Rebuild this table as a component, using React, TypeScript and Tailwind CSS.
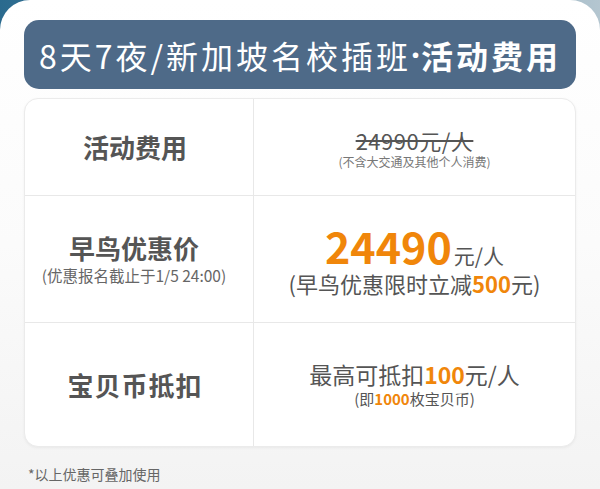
const cjk = "font-['Noto_Sans_CJK_SC','Noto_Sans',sans-serif]";

const App = () => {
  return (
    <div className={`w-[600px] h-[489px] overflow-hidden bg-gradient-to-r from-[#2a6a8e] via-[#5f8fa9] to-[#b4c6d0] ${cjk}`}>
      <div className="h-full rounded-t-[30px] bg-gradient-to-b from-white via-[#fbfbfb] to-[#f3f3f3] px-[24px] pt-[20px]">
        {/* Title bar */}
        <div className="h-[69px] rounded-[15px] bg-[#4e6a88] flex items-center justify-center text-white text-[32px] tracking-[3px] leading-none">
          <span className="font-normal">8天7夜/新加坡名校插班</span>
          <span className="font-bold font-['Noto_Sans',sans-serif] tracking-[1px]">·</span>
          <span className="font-bold">活动费用</span>
        </div>

        {/* Price table */}
        <div className="mt-[9px] h-[349px] rounded-[14px] border border-[#ebebeb] bg-white shadow-[0_1px_3px_rgba(0,0,0,0.05)] grid grid-cols-[229px_1fr] grid-rows-[97px_127px_123px] overflow-hidden text-[#555]">
          <div className="flex items-center justify-center border-r border-b border-[#e8e8e8] pr-[8px]">
            <span className="text-[26px] leading-[34px] font-bold">活动费用</span>
          </div>
          <div className="flex flex-col items-center justify-center border-b border-[#e8e8e8] pt-[4px]">
            <span className="text-[22px] leading-[26px] tracking-[0.5px] line-through decoration-[1.5px] decoration-[#555]">24990元/人</span>
            <span className="text-[12px] leading-[18px] text-[#777]">(不含大交通及其他个人消费)</span>
          </div>

          <div className="flex flex-col items-center justify-center border-r border-b border-[#e8e8e8] pr-[10px]">
            <span className="text-[26px] leading-[32px] font-bold">早鸟优惠价</span>
            <span className="text-[15.5px] leading-[22px] text-[#666] whitespace-nowrap">(优惠报名截止于1/5 24:00)</span>
          </div>
          <div className="flex flex-col items-center justify-center border-b border-[#e8e8e8] pt-[2px]">
            <div className="flex items-baseline h-[44px] leading-[44px]">
              <span className="text-[43px] font-bold text-[#f0860a]">24490</span>
              <span className="text-[21px] ml-[2px]">元/人</span>
            </div>
            <span className="text-[22px] leading-[30px] mt-[1px]">
              (早鸟优惠限时立减<span className="font-bold text-[#f0860a]">500</span>元)
            </span>
          </div>

          <div className="flex items-center justify-center border-r border-[#e8e8e8] pr-[8px]">
            <span className="text-[26px] leading-[34px] font-bold tracking-[1px]">宝贝币抵扣</span>
          </div>
          <div className="flex flex-col items-center justify-center pb-[2px]">
            <span className="text-[23px] leading-[30px]">
              最高可抵扣<span className="font-bold text-[#f0860a]">100</span>元/人
            </span>
            <span className="text-[15px] leading-[20px] text-[#555]">
              (即<span className="font-bold text-[#f0860a]">1000</span>枚宝贝币)
            </span>
          </div>
        </div>

        <p className="mt-[17px] pl-[4px] text-[14px] text-[#666]">*以上优惠可叠加使用</p>
      </div>
    </div>
  );
};

export default App;
